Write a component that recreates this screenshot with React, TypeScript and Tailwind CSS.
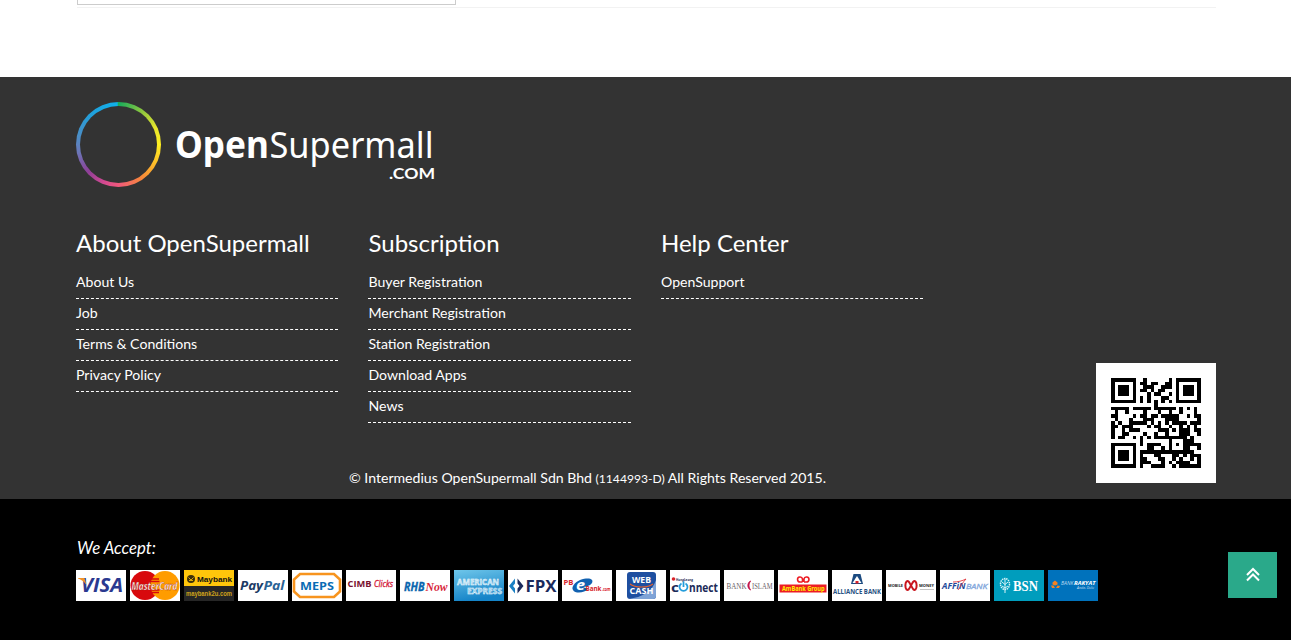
import React from 'react';
import type { ReactNode } from 'react';

/* QR code, version 2 (25 x 25 modules), level L, byte mode */
const SIZE = 25;
const DATA_WORDS = 34;
const EC_WORDS = 10;
const MASK = 2;

function errorWords(data: number[], count: number): number[] {
  const exp: number[] = [];
  const log: number[] = [];
  let x = 1;
  for (let i = 0; i < 255; i++) {
    exp[i] = x;
    log[x] = i;
    x <<= 1;
    if (x & 256) x ^= 0x11d;
  }
  const mul = (a: number, b: number) => (a && b ? exp[(log[a] + log[b]) % 255] : 0);
  let gen = [1];
  for (let i = 0; i < count; i++) {
    const next: number[] = new Array(gen.length + 1).fill(0);
    gen.forEach((c, j) => {
      next[j] ^= c;
      next[j + 1] ^= mul(c, exp[i]);
    });
    gen = next;
  }
  const msg = [...data, ...new Array(count).fill(0)];
  for (let i = 0; i < data.length; i++) {
    const c = msg[i];
    if (c) gen.forEach((q, j) => { msg[i + j] ^= mul(q, c); });
  }
  return msg.slice(data.length);
}

function qrMatrix(text: string): number[][] {
  const byte = (v: number) => v.toString(2).padStart(8, '0');
  let bits = '0100' + byte(text.length);
  for (const ch of text) bits += byte(ch.charCodeAt(0));
  bits += '0000';
  const data: number[] = [];
  for (let i = 0; i < bits.length; i += 8) data.push(parseInt(bits.slice(i, i + 8), 2));
  for (let k = 0; data.length < DATA_WORDS; k++) data.push(k % 2 ? 0x11 : 0xec);
  const stream = [...data, ...errorWords(data, EC_WORDS)].map(byte).join('');

  const m: number[][] = Array.from({ length: SIZE }, () => Array(SIZE).fill(-1));
  const finder = (r: number, c: number) => {
    for (let i = -1; i < 8; i++)
      for (let j = -1; j < 8; j++) {
        if (r + i < 0 || c + j < 0 || r + i >= SIZE || c + j >= SIZE) continue;
        const d = Math.max(Math.abs(i - 3), Math.abs(j - 3));
        m[r + i][c + j] = d === 3 || d < 2 ? 1 : 0;
      }
  };
  finder(0, 0);
  finder(0, 18);
  finder(18, 0);
  for (let i = -2; i < 3; i++)
    for (let j = -2; j < 3; j++) m[18 + i][18 + j] = Math.max(Math.abs(i), Math.abs(j)) === 1 ? 0 : 1;
  for (let i = 8; i < 17; i++) m[6][i] = m[i][6] = i % 2 ? 0 : 1;

  const info = (1 << 3) | MASK;
  let rem = info;
  for (let i = 0; i < 10; i++) rem = (rem << 1) ^ ((rem >> 9) * 0x537);
  const format = ((info << 10) | rem) ^ 0x5412;
  const f = (i: number) => (format >> i) & 1;
  for (let i = 0; i < 6; i++) m[i][8] = f(i);
  m[7][8] = f(6);
  m[8][8] = f(7);
  m[8][7] = f(8);
  for (let i = 9; i < 15; i++) m[8][14 - i] = f(i);
  for (let i = 0; i < 8; i++) m[8][SIZE - 1 - i] = f(i);
  for (let i = 8; i < 15; i++) m[SIZE - 15 + i][8] = f(i);
  m[SIZE - 8][8] = 1;

  let p = 0;
  let up = true;
  for (let x = SIZE - 1; x > 0; x -= 2) {
    if (x === 6) x = 5;
    for (let q = 0; q < SIZE; q++) {
      const y = up ? SIZE - 1 - q : q;
      for (const c of [x, x - 1])
        if (m[y][c] === -1) {
          const v = p < stream.length ? +stream[p] : 0;
          p++;
          m[y][c] = c % 3 === 0 ? v ^ 1 : v;
        }
    }
    up = !up;
  }
  return m;
}

const qrPath = qrMatrix('http://opensupermall.com')
  .flatMap((row, y) => row.map((v, x) => (v ? `M${x} ${y}h1v1h-1z` : '')))
  .join('');

const columns = [
  { title: 'About OpenSupermall', links: ['About Us', 'Job', 'Terms & Conditions', 'Privacy Policy'] },
  { title: 'Subscription', links: ['Buyer Registration', 'Merchant Registration', 'Station Registration', 'Download Apps', 'News'] },
  { title: 'Help Center', links: ['OpenSupport'] },
];

type TProps = { x: number; y: number; w: number; s: number; fill: string; b?: boolean; i?: boolean; f?: string; children: ReactNode; stroke?: string };
function T({ x, y, w, s, fill, b, i, f = 'Open Sans', children, stroke }: TProps) {
  return (
    <text x={x} y={y} textLength={w} lengthAdjust="spacingAndGlyphs" fontSize={s} fill={fill} stroke={stroke} strokeWidth={stroke ? 0.35 : undefined}
      fontWeight={b ? 700 : 400} fontStyle={i ? 'italic' : 'normal'} fontFamily={`${f}, sans-serif`}>
      {children}
    </text>
  );
}

const cards: { name: string; art: ReactNode }[] = [
  { name: 'Visa', art: <><T x={5} y={22} w={42} s={19} fill="#2b3990" b i>VISA</T><path d="M2 8h6.500l2 7C8 11 5 9.500 2 8.500z" fill="#f0932b" /></> },
  { name: 'MasterCard', art: <><circle cx="15" cy="15.500" r="14.500" fill="#d8090d" /><circle cx="35" cy="15.500" r="14.500" fill="#ff9c00" /><path d="M21 9h8M20.500 11.500h9M20.500 20h9M21 22.500h8" stroke="#d8090d" strokeWidth="1.300" /><T x={1.500} y={19.500} w={46} s={11} fill="#fff" b i stroke="#a3200c">MasterCard</T></> },
  { name: 'Maybank', art: <><rect width="50" height="31" fill="#262626" /><rect width="50" height="16" fill="#ffc60b" /><circle cx="7" cy="9" r="4" fill="#3d300a" /><path d="M4.500 7.500L7 10l2.500-2.500M5 10.500h4" stroke="#ffc60b" strokeWidth=".8" fill="none" /><T x={13} y={12} w={35} s={8} fill="#111" b f="Liberation Sans">Maybank</T><T x={2} y={25.500} w={46} s={7} fill="#d0a31a" b f="Liberation Sans">maybank2u.com</T></> },
  { name: 'PayPal', art: <><T x={2} y={20} w={23} s={12.500} fill="#1b3a64" b i>Pay</T><T x={25.500} y={20} w={21} s={12.500} fill="#2a6395" b i>Pal</T></> },
  { name: 'MEPS', art: <><path d="M8 4h34l6 5.500v12L42 27H8l-6-5.500v-12z" fill="none" stroke="#f7941e" strokeWidth="2.600" /><T x={8} y={19.500} w={34} s={11} fill="#0a6cb4" b>MEPS</T></> },
  { name: 'CIMB Clicks', art: <><T x={1.500} y={16.500} w={24} s={9} fill="#7a1230" b>CIMB</T><T x={28} y={16.500} w={19} s={9} fill="#d4213c" i stroke="#d4213c">Clicks</T></> },
  { name: 'RHB Now', art: <><T x={4} y={21} w={20.500} s={13} fill="#0a66ae" b i stroke="#0a66ae">RHB</T><T x={25.500} y={20.500} w={22} s={13} fill="#d7263b" b i f="Liberation Serif">Now</T></> },
  { name: 'American Express', art: <><defs><linearGradient id="amex" x1="0" y1="0" x2="0.300" y2="1"><stop stopColor="#6fc6ea" /><stop offset="1" stopColor="#1584c8" /></linearGradient></defs><rect width="50" height="31" fill="url(#amex)" /><T x={3} y={14.500} w={42} s={8} fill="#a9dbf1" b stroke="#fff">AMERICAN</T><T x={13} y={23.500} w={35} s={8} fill="#8acbec" b stroke="#fff">EXPRESS</T></> },
  { name: 'FPX', art: <><path d="M7 8.500L1 16l6 7.500v-5L5 16l2-2.500z" fill="#1a80c4" /><path d="M9.500 8.500l6 7.500-6 7.500v-5l2-2.500-2-2.500z" fill="#1b2a5c" /><T x={17.500} y={22} w={31} s={15.500} fill="#1b2a5c" b>FPX</T></> },
  { name: 'PBe Bank', art: <><path d="M18 10c9-3 14-1 12 3-2 3-7 4-9 4l5 2c-3 4-13 5-15 1-2-3 2-8 7-10z" fill="#1161b0" /><T x={14} y={20} w={9} s={15} fill="#fff" b i>e</T><T x={1.500} y={14.500} w={10} s={7} fill="#d8232a" b>PB</T><T x={23.500} y={20.500} w={16} s={7} fill="#d8232a" b>Bank</T><T x={40} y={20.500} w={8.500} s={4.500} fill="#d8232a" b>.com</T></> },
  { name: 'Web Cash', art: <><rect x="11" y="2" width="29" height="27" rx="3" fill="#1e4fa0" /><path d="M13 29h24c2 0 3-1 3-3V10C36 22 26 27 13 29z" fill="#7fa3d6" /><path d="M14 14c5 4 18 4 23 0" fill="none" stroke="#e8622c" strokeWidth="1.200" /><T x={16} y={13} w={19} s={8} fill="#fff" b>WEB</T><T x={13.500} y={23.500} w={24} s={8} fill="#fff" b>CASH</T></> },
  { name: 'Hong Leong Connect', art: <><circle cx="3.500" cy="9" r="1.800" fill="#d8232a" /><T x={6} y={10.500} w={17} s={4} fill="#1c2b58" b>HongLeong</T><T x={1} y={21.500} w={8} s={13} fill="#1c2b58" b>c</T><path d="M11.500 13.500a4 4 0 1 0 4 0M13.500 11.500v5.500" fill="none" stroke="#249ddb" strokeWidth="1.800" /><T x={19} y={21.500} w={29} s={13} fill="#1c2b58" b>nnect</T></> },
  { name: 'Bank Islam', art: <><T x={2.500} y={19} w={20} s={8} fill="#6b6267" f="Liberation Serif">BANK</T><path d="M26.500 11c-3.500 2-3.500 7 0 9-2-3-2-6 0-9z" fill="#c4164c" stroke="#c4164c" /><T x={28} y={19} w={20.500} s={8} fill="#6b6267" f="Liberation Serif">ISLAM</T></> },
  { name: 'AmBank Group', art: <><path d="M24.500 12V9a2.500 2.500 0 1 0-2.500 3h2.500M26 12V9a2.500 2.500 0 1 1 2.500 3H26" fill="none" stroke="#ed1c24" strokeWidth="1.600" /><rect x="1.500" y="14.500" width="47" height="8" fill="#ed1c24" /><T x={4} y={20.800} w={42.500} s={6.500} fill="#fff200" b>AmBank Group</T></> },
  { name: 'Alliance Bank', art: <><path d="M21.500 4h7l2.500 10H19z" fill="#1b4a80" /><path d="M25 6l4.500 7h-9z" fill="#fff" /><path d="M23.500 11h3v2.500h-3z" fill="#d8232a" /><T x={1} y={23.500} w={48} s={7} fill="#27507f" b>ALLIANCE BANK</T></> },
  { name: 'Mobile Money', art: <><T x={2} y={17} w={15} s={4} fill="#222" b>MOBILE</T><T x={33} y={17} w={15} s={4} fill="#222" b>MONEY</T><path d="M20.500 11.500c2-1.500 3 1.500 4.500 4s2.500 5.500 4.500 4c1.500-1.500 1.500-6.500 0-8-2-1.500-3 1.500-4.500 4s-2.500 5.500-4.500 4c-1.500-1.500-1.500-6.500 0-8z" fill="none" stroke="#c9151e" strokeWidth="2" /><path d="M34 19.500h14" stroke="#aaa" strokeWidth=".7" /></> },
  { name: 'Affin Bank', art: <><T x={2} y={18.500} w={23.500} s={8} fill="#234a9a" b i>AFFiN</T><T x={26} y={18.500} w={21.500} s={8} fill="#86a9dc" i stroke="#86a9dc">BANK</T><path d="M13 12c5 0 9-1 13-3-3 3-6 8-8 11" fill="none" stroke="#e0383e" strokeWidth=".9" /></> },
  { name: 'BSN', art: <><rect width="50" height="31" fill="#009dbd" /><ellipse cx="11" cy="14" rx="4.500" ry="5.500" fill="none" stroke="#d7f3f7" strokeWidth="1.500" strokeDasharray="1.500 .7" /><path d="M11 9v14M8 12l3 2.500 3-2.500M8 16l3 2 3-2" fill="none" stroke="#d7f3f7" /><T x={19} y={20.500} w={25} s={14} fill="#fff" b f="Liberation Serif">BSN</T></> },
  { name: 'Bank Rakyat', art: <><rect width="50" height="31" fill="#0072bc" /><path d="M7 10.500l2.500 2v2L7 15.500l-2.500-1v-2zM3 15.500l2.500 0 1.500 2.500H4zM8 18l1.500-2.500L12 16l-1 2z" fill="#f58220" /><T x={13} y={14.500} w={12.500} s={5} fill="#b8d8ef" i>BANK</T><T x={26} y={14.500} w={21.500} s={5} fill="#fff" b i>RAKYAT</T><T x={29} y={19} w={17} s={3.500} fill="#c6dff2" i>Anda, Dulu</T></> },
];

function Logo() {
  return (
    <div className="flex h-[85px] w-[360px]">
      <div className="size-[85px] shrink-0 rounded-full bg-[conic-gradient(#16ab5c,#8cc63f_35deg,#e6e52d_65deg,#fff021_90deg,#fdb92a_120deg,#f7883a_145deg,#f0597c_180deg,#d64a90_200deg,#8f3f98_228deg,#6a78b8_260deg,#4b8ec6_282deg,#239fda_315deg,#0fb0ea_358deg,#16ab5c)] p-1">
        <div className="size-full rounded-full bg-[#333]" />
      </div>
      <svg className="block h-[85px] w-[275px] overflow-visible" viewBox="0 0 275 85">
        <T x={14} y={56} w={94} s={37} fill="#fff" b f="Noto Sans">Open</T>
        <T x={108.500} y={56} w={164} s={37} fill="#fff" f="Noto Sans">Supermall</T>
        <T x={228} y={77} w={46} s={15.500} fill="#fff" b f="Lato">.COM</T>
      </svg>
    </div>
  );
}

export default function App() {
  return (
    <div className="relative flex h-[640px] flex-col overflow-hidden bg-white font-['Lato',sans-serif] text-[14.1px] text-white">
      <div className="h-[77px] pl-[77px]">
        <div className="h-[5px] w-[379px] border border-t-0 border-[#ccc]" />
        <div className="mt-[2px] h-px w-[1139px] bg-[#f2f2f2]" />
      </div>
      <footer className="flex h-[422px] flex-col bg-[#333] pt-[25px]">
        <div className="pl-[76px]"><Logo /></div>
        <div className="flex pl-[75.5px] pt-[40px]">
          {columns.map((c) => (
            <section key={c.title} className="mr-[30px] h-[210px] w-[262.5px]">
              <h3 className="mb-[10px] pl-[0.5px] text-2xl leading-[31px]">{c.title}</h3>
              <ul>
                {c.links.map((l) => (
                  <li key={l} className="h-[31px] border-b border-dashed border-white pl-[0.5px] pt-1 leading-5">{l}</li>
                ))}
              </ul>
            </section>
          ))}
          <div className="ml-auto mr-[75px] mt-[136px] size-[120px] bg-white p-[15px]">
            <svg className="block size-[90px]" viewBox="0 0 25 25" shapeRendering="crispEdges"><path d={qrPath} /></svg>
          </div>
        </div>
        <p className="-mt-[15px] pl-[349px] leading-5">© Intermedius OpenSupermall Sdn Bhd <span className="text-[12.1px]">(1144993-D)</span> All Rights Reserved 2015.</p>
      </footer>
      <div className="flex-1 bg-black pl-[76px] pt-[38px]">
        <p className="pl-px text-[16.8px] italic leading-[22px]">We Accept:</p>
        <ul className="mt-[11px] flex gap-1">
          {cards.map((c) => (
            <li key={c.name} className="h-[31px] w-[50px] bg-white">
              <svg className="block h-[31px] w-[50px] overflow-visible" viewBox="0 0 50 31" aria-label={c.name}>{c.art}</svg>
            </li>
          ))}
        </ul>
      </div>
      <button className="absolute left-[1228px] top-[552px] flex h-[46px] w-[49px] items-center justify-center bg-[#2aa98a]" aria-label="Top">
        <svg className="size-4" viewBox="0 0 16 16" fill="none" stroke="#fff" strokeWidth="2"><path d="M2 8L8 2l6 6M2 13.500l6-6 6 6" /></svg>
      </button>
    </div>
  );
}
